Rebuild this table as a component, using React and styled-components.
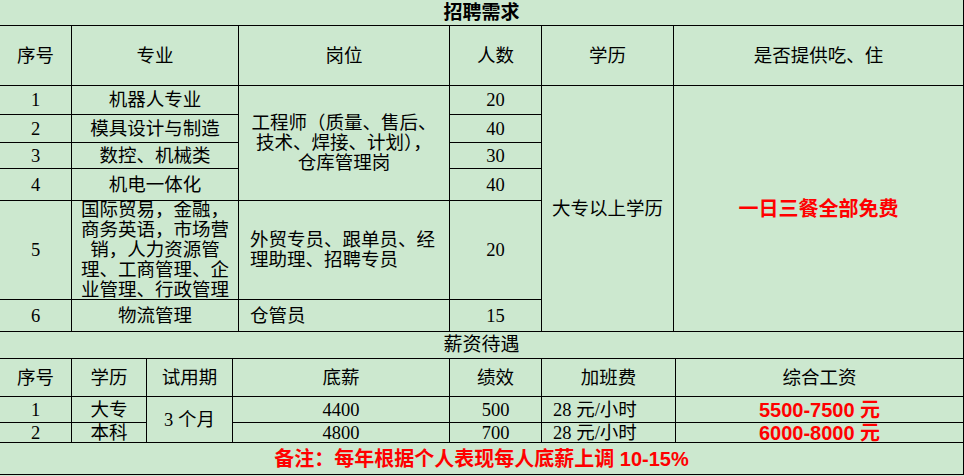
import React from "react";
import styled, { createGlobalStyle } from "styled-components";

const GREEN = "#cce8cf";
const RED = "#ff0000";

const GlobalStyle = createGlobalStyle`
  html, body {
    margin: 0;
    padding: 0;
    background: ${GREEN};
  }
  body {
    font-family: "Liberation Serif", "Noto Sans CJK SC", serif;
    color: #000;
  }
`;

const Sheet = styled.div`
  width: 964px;
  height: 476px;
  background: ${GREEN};
  overflow: hidden;
`;

const Grid = styled.div`
  display: grid;
  grid-template-columns: ${(p) => p.$cols};
  grid-template-rows: ${(p) => p.$rows};
`;

const Cell = styled.div`
  box-sizing: border-box;
  min-width: 0;
  display: flex;
  align-items: center;
  justify-content: ${(p) => (p.$left ? "flex-start" : "center")};
  text-align: ${(p) => (p.$left ? "left" : "center")};
  padding: 0 ${(p) => p.$pad ?? 10}px;
  border-right: 1px solid #000;
  border-bottom: 1px solid #000;
  grid-column: span ${(p) => p.$colSpan || 1};
  grid-row: span ${(p) => p.$rowSpan || 1};
  font-size: 18.5px;
  line-height: 20px;
`;

const TitleCell = styled(Cell)`
  font-weight: ${(p) => (p.$bold ? 700 : 400)};
  font-size: 19px;
`;

// red bold bits: meals, total pay, note
const Hot = styled.span`
  color: ${RED};
  font-weight: 700;
  font-size: 20px;
  font-family: "Liberation Sans", "Noto Sans CJK SC", sans-serif;
`;

const recruitHead = ["序号", "专业", "岗位", "人数", "学历", "是否提供吃、住"];
const salaryHead = ["序号", "学历", "试用期", "底薪", "绩效", "加班费", "综合工资"];

const salaryRows = [
  { no: 1, edu: "大专", base: 4400, bonus: 500, total: "5500-7500 元" },
  { no: 2, edu: "本科", base: 4800, bonus: 700, total: "6000-8000 元" },
];

export default function App() {
  return (
    <Sheet>
      <GlobalStyle />
      <Grid
        $cols="72px 167px 211px 92px 132px 290px"
        $rows="26px 60px 29px 28px 26px 32px 99px 32px"
      >
        <TitleCell $colSpan={6} $bold>
          招聘需求
        </TitleCell>
        {recruitHead.map((h) => (
          <Cell key={h}>{h}</Cell>
        ))}

        {/* row 1 carries the merged cells */}
        <Cell>1</Cell>
        <Cell $pad={6}>机器人专业</Cell>
        <Cell $rowSpan={4}>工程师（质量、售后、技术、焊接、计划），仓库管理岗</Cell>
        <Cell>20</Cell>
        <Cell $rowSpan={6}>大专以上学历</Cell>
        <Cell $rowSpan={6}>
          <Hot>一日三餐全部免费</Hot>
        </Cell>

        <Cell>2</Cell>
        <Cell $pad={6}>模具设计与制造</Cell>
        <Cell>40</Cell>

        <Cell>3</Cell>
        <Cell $pad={6}>数控、机械类</Cell>
        <Cell>30</Cell>

        <Cell>4</Cell>
        <Cell $pad={6}>机电一体化</Cell>
        <Cell>40</Cell>

        <Cell>5</Cell>
        <Cell $pad={6}>
          国际贸易，金融，商务英语，市场营销，人力资源管理、工商管理、企业管理、行政管理
        </Cell>
        <Cell $left $pad={11}>
          外贸专员、跟单员、经理助理、招聘专员
        </Cell>
        <Cell>20</Cell>

        <Cell>6</Cell>
        <Cell $pad={6}>物流管理</Cell>
        <Cell $left $pad={11}>
          仓管员
        </Cell>
        <Cell>15</Cell>
      </Grid>

      <Grid
        $cols="72px 75px 86px 217px 92px 134px 288px"
        $rows="27px 38px 26px 20px 32px"
      >
        <TitleCell $colSpan={7}>薪资待遇</TitleCell>
        {salaryHead.map((h) => (
          <Cell key={h}>{h}</Cell>
        ))}

        {salaryRows.map((r, i) => (
          <React.Fragment key={r.no}>
            <Cell>{r.no}</Cell>
            <Cell>{r.edu}</Cell>
            {i === 0 && <Cell $rowSpan={2}>3 个月</Cell>}
            <Cell>{r.base}</Cell>
            <Cell>{r.bonus}</Cell>
            <Cell $left $pad={11}>
              28 元/小时
            </Cell>
            <Cell>
              <Hot>{r.total}</Hot>
            </Cell>
          </React.Fragment>
        ))}

        <Cell $colSpan={7}>
          <Hot>备注：每年根据个人表现每人底薪上调 10-15%</Hot>
        </Cell>
      </Grid>
    </Sheet>
  );
}
